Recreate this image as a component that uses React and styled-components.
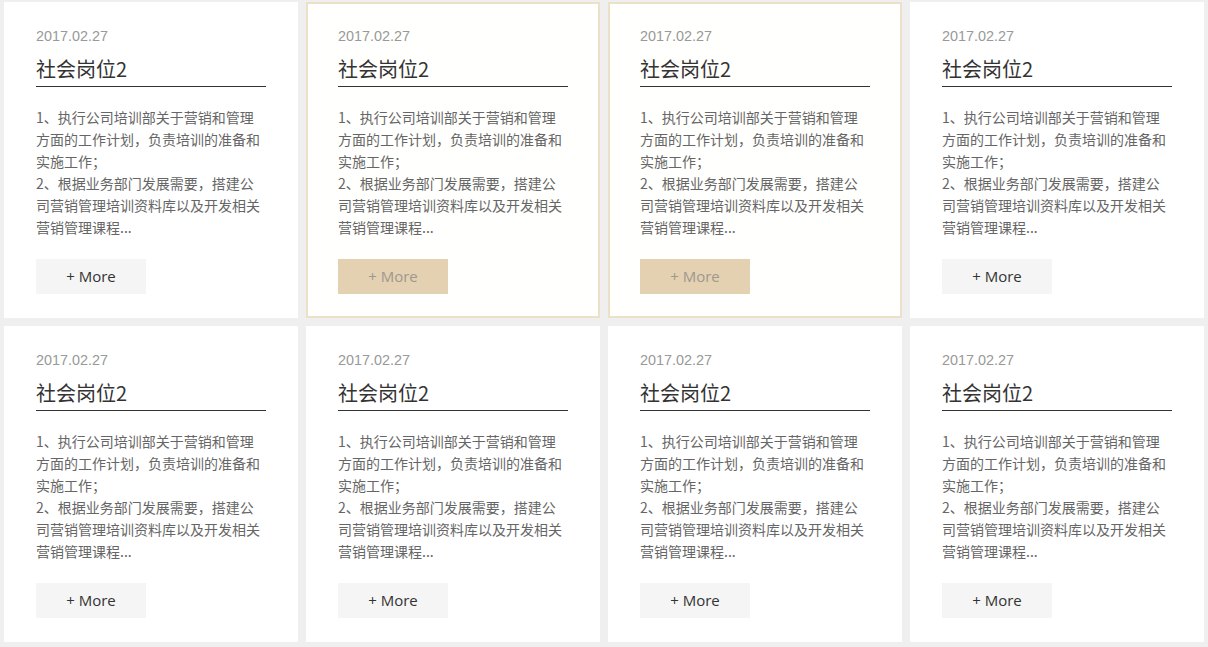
import React from "react";
import styled, { createGlobalStyle, css } from "styled-components";

const Global = createGlobalStyle`
  html, body { margin: 0; padding: 0; background: #efefef; }
  body { font-family: "Noto Sans CJK SC", "Noto Sans", sans-serif; }
  * { box-sizing: border-box; }
`;

const Grid = styled.div`
  display: grid;
  grid-template-columns: repeat(4, 294px);
  grid-auto-rows: 316px;
  gap: 8px;
  padding: 2px 4px 5px;
`;

const Card = styled.div`
  background: #fff;
  padding: 24px 32px 24px;
  display: flex;
  flex-direction: column;
  ${(p) =>
    p.$active &&
    css`
      background: #fffffd;
      box-shadow: inset 0 0 0 2px #ede0c8;
    `}
`;

const DateText = styled.div`
  font-family: "Liberation Sans", Arial, sans-serif;
  font-size: 14.4px;
  line-height: 20px;
  color: #999;
`;

const Title = styled.h3`
  margin: 8px 0 0;
  font-weight: normal;
  font-size: 20px;
  line-height: 30px;
  color: #333;
  padding-bottom: 2px;
  border-bottom: 1px solid #333;
  font-family: "Noto Sans CJK SC", sans-serif;
`;

const Desc = styled.p`
  margin: 19px 0 0;
  font-size: 14px;
  line-height: 22px;
  height: 132px;
  color: #666;
  overflow: hidden;
`;

const MoreButton = styled.a`
  margin-top: 21px;
  width: 110px;
  height: 35px;
  padding-bottom: 2px;
  display: flex;
  align-items: center;
  justify-content: center;
  font-family: "Open Sans", "Noto Sans", sans-serif;
  font-size: 15px;
  color: ${(p) => (p.$active ? "#9e9890" : "#333")};
  background: ${(p) => (p.$active ? "#e4d1b1" : "#f5f5f5")};
  text-decoration: none;
  cursor: pointer;
`;

const items = Array.from({ length: 8 }, (_, i) => ({
  id: i,
  active: i === 1 || i === 2,
}));

export default function App() {
  return (
    <>
      <Global />
      <Grid>
        {items.map((it) => (
          <Card key={it.id} $active={it.active}>
            <DateText>2017.02.27</DateText>
            <Title>社会岗位2</Title>
            <Desc>
              1、执行公司培训部关于营销和管理方面的工作计划，负责培训的准备和实施工作；
              <br />
              2、根据业务部门发展需要，搭建公司营销管理培训资料库以及开发相关营销管理课程...
            </Desc>
            <MoreButton $active={it.active}>+ More</MoreButton>
          </Card>
        ))}
      </Grid>
    </>
  );
}
